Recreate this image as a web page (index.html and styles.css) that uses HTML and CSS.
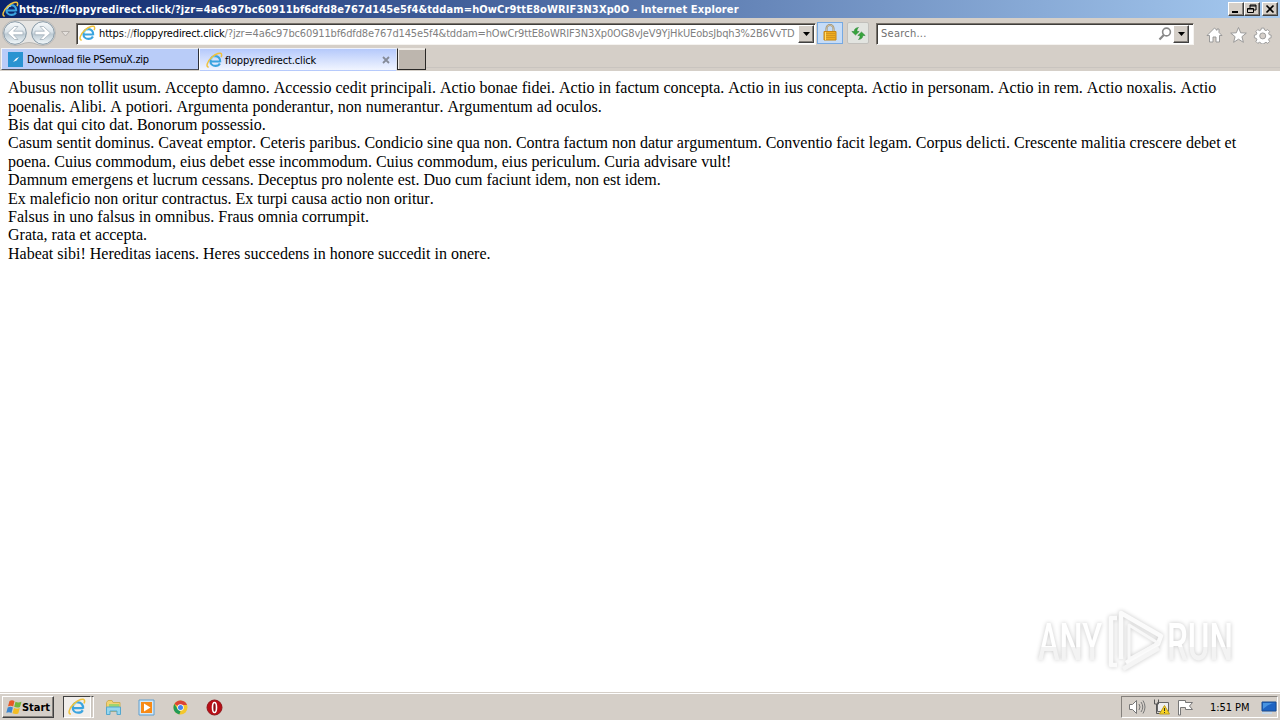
FILE: index.html
```html
<!DOCTYPE html>
<html lang="en">
<head>
    <meta charset="UTF-8">
    <meta name="viewport" content="width=device-width, initial-scale=1.0">
    <title>floppyredirect.click</title>
    <link rel="stylesheet" href="styles.css">
</head>
<body>
    <!-- shared icon -->
    <svg class="defs" width="0" height="0">
        <symbol id="ie" viewBox="0 0 16 16">
            <path d="M13.4 8.900H5M13.400 9.500c.3-3.500-1.800-5.600-4.600-5.600-2.700 0-4.600 2-4.600 4.700 0 2.600 2 4.500 4.700 4.500 2 0 3.500-.9 4.200-2.300" fill="none" stroke="#3ba4df" stroke-width="2"/>
            <path d="M5.200 7.300C5.600 5.600 7 4.700 8.600 4.700" fill="none" stroke="#9be0fa" stroke-width="1"/>
            <path d="M2.600 14.200C-.5 14.400 1 9 5.200 5.200 9 1.600 14.200-.3 14.700 2.300c.2.8 0 1.600-.5 2.600" fill="none" stroke="#f0c23c" stroke-width="1.400"/>
        </symbol>
    </svg>

    <div class="titlebar">
        <svg class="title-icon" width="17" height="17"><use href="#ie"/></svg>
        <span class="title-text">https://floppyredirect.click/?jzr=4a6c97bc60911bf6dfd8e767d145e5f4&amp;tddam=hOwCr9ttE8oWRIF3N3Xp0O - Internet Explorer</span>
        <div class="window-buttons">
            <button class="win-btn"><svg width="12" height="10"><path d="M2 7h6v2H2z"/></svg></button>
            <button class="win-btn"><svg width="12" height="10"><path d="M4 1h6v5H8M4 2h6M4 1v3M1.500 4.500h6v4h-6zM1.500 5h6" fill="none" stroke="#000"/></svg></button>
            <button class="win-btn close"><svg width="12" height="10"><path d="M2.500 1.500l7 7M9.500 1.500l-7 7" stroke="#000" stroke-width="1.700"/></svg></button>
        </div>
    </div>

    <div class="navbar">
        <svg class="nav-arrows" width="76" height="30" viewBox="0 0 76 30">
            <defs>
                <linearGradient id="ball" x1="0" y1="0" x2="0" y2="1">
                    <stop offset="0" stop-color="#f8fafb"/>
                    <stop offset=".45" stop-color="#dbe4ea"/>
                    <stop offset=".55" stop-color="#bccad3"/>
                    <stop offset="1" stop-color="#f4fafd"/>
                </linearGradient>
            </defs>
            <path d="M15 2.500h28a12.500 12.500 0 0 1 0 25c-6 0-8-3-14-3s-8 3-14 3a12.500 12.500 0 0 1 0-25z" fill="#e6e5e3" stroke="#b9b7b4"/>
            <g fill="url(#ball)" stroke="#8698a5">
                <circle cx="15" cy="15" r="11.300"/>
                <circle cx="43" cy="15" r="11.300"/>
            </g>
            <g fill="#fff" stroke="#a3b0ba" stroke-width=".8">
                <path d="M7.500 15l7-6.500h3.500l-4.500 4.700H23v3.600h-9.500l4.500 4.700h-3.500z"/>
                <path d="M50.500 15l-7-6.500H40l4.500 4.700H35v3.600h9.500L40 21.500h3.500z"/>
            </g>
            <path d="M61.500 13.500h8l-4 4.500z" fill="#e4e0dc" stroke="#b5b0ab"/>
        </svg>

        <div class="field address">
            <svg class="field-icon" width="17" height="17"><use href="#ie"/></svg>
            <span class="url"><span class="dark">https</span>://<span class="dark">floppyredirect.click</span>/?jzr=4a6c97bc60911bf6dfd8e767d145e5f4&amp;tddam=hOwCr9ttE8oWRIF3N3Xp0OG8vJeV9YjHkUEobsJbqh3%2B6VvTD</span>
            <button class="drop"><svg width="7" height="4"><path d="M0 0h7L3.500 4z"/></svg></button>
        </div>

        <div class="tool lock">
            <svg width="16" height="18" viewBox="0 0 16 18">
                <path d="M4.500 8V4.500a3.500 3.500 0 0 1 7 0V8" fill="none" stroke="#9a8b6c" stroke-width="2"/>
                <path d="M4.500 8V4.500a3.500 3.500 0 0 1 7 0V8" fill="none" stroke="#e2d6b7" stroke-width=".7"/>
                <path d="M2 7.500h12v8.500H2z" fill="#efad20" stroke="#c78615"/>
                <path d="M2.500 9.500h11M2.500 11.500h11M2.500 13.500h11" stroke="#d5961f"/>
                <path d="M3.500 8v8" stroke="#ffdc70"/>
            </svg>
        </div>
        <div class="tool refresh">
            <svg width="15" height="15" viewBox="0 0 15 15" fill="#36a43b" stroke="#248030" stroke-width=".5">
                <path d="M4.500 9L.8 5.500h2.400C3.300 3 4.700 1.800 7.500 1.500 6.200 2.700 6 3.800 6 5.500h2.200z"/>
                <path d="M10.500 6l3.700 3.500h-2.400c-.1 2.500-1.500 3.700-4.300 4C8.800 12.300 9 11.200 9 9.500H6.800z"/>
            </svg>
        </div>

        <div class="field search">
            <span class="placeholder">Search...</span>
            <svg class="magnifier" width="14" height="14"><circle cx="8.500" cy="5" r="3.900" fill="none" stroke="#888" stroke-width="1.600"/><path d="M5.800 7.900L1.500 12.500" stroke="#888" stroke-width="2.200"/></svg>
            <button class="drop"><svg width="7" height="4"><path d="M0 0h7L3.500 4z"/></svg></button>
        </div>

        <svg class="menu-icons" width="70" height="18" viewBox="0 0 70 18" fill="#fff" stroke="#929292" stroke-width=".9">
            <path d="M3.500 16V9.500H1L8.500 2l2.500 2.400V3h2v3.500l3 3h-2.500V16h-3.500v-5h-3v5z"/>
            <path d="M32.500 1.500l2.200 5.300 5.600.3-4.400 3.600 1.500 5.600-4.900-3.100-4.900 3.100 1.500-5.600-4.400-3.600 5.600-.3z"/>
            <g transform="translate(2.500 .7) scale(.94)">
                <path d="M56.300 1.500h2.800l.5 2 1.600.7 1.800-1.100 2 2-1.100 1.800.7 1.600 2 .5v2.800l-2 .5-.7 1.600 1.100 1.800-2 2-1.800-1.100-1.600.7-.5 1h-2.800l-.5-1-1.600-.7-1.800 1.100-2-2 1.100-1.800-.7-1.600-2-.5V9l2-.5.7-1.600-1.100-1.800 2-2 1.800 1.100 1.600-.7z"/>
                <circle cx="57.700" cy="9.800" r="3.200" fill="#d5cfc9"/>
            </g>
        </svg>
    </div>

    <div class="tabs">
        <div class="tab">
            <svg class="tab-icon" width="16" height="16"><path d="M0 0h15v15H0z" fill="#2993d1"/><path d="M5 10l3-3.500 3-1.500-2.500 3.500z" fill="#fff"/></svg>
            <span class="tab-first-text">Download file PSemuX.zip</span>
        </div>
        <div class="tab active">
            <svg class="tab-icon" width="17" height="17"><use href="#ie"/></svg>
            <span class="tab-second-text">floppyredirect.click</span>
            <svg class="tab-close" width="8" height="8"><path d="M1 1l6 6M7 1L1 7" stroke="#858b98" stroke-width="1.800"/></svg>
        </div>
        <div class="new-tab"></div>
    </div>

    <main class="page">
        Abusus non tollit usum. Accepto damno. Accessio cedit principali. Actio bonae fidei. Actio in factum concepta. Actio in ius concepta. Actio in personam. Actio in rem. Actio noxalis. Actio<br>
        poenalis. Alibi. A potiori. Argumenta ponderantur, non numerantur. Argumentum ad oculos.<br>
        Bis dat qui cito dat. Bonorum possessio.<br>
        Casum sentit dominus. Caveat emptor. Ceteris paribus. Condicio sine qua non. Contra factum non datur argumentum. Conventio facit legam. Corpus delicti. Crescente malitia crescere debet et<br>
        poena. Cuius commodum, eius debet esse incommodum. Cuius commodum, eius periculum. Curia advisare vult!<br>
        Damnum emergens et lucrum cessans. Deceptus pro nolente est. Duo cum faciunt idem, non est idem.<br>
        Ex maleficio non oritur contractus. Ex turpi causa actio non oritur.<br>
        Falsus in uno falsus in omnibus. Fraus omnia corrumpit.<br>
        Grata, rata et accepta.<br>
        Habeat sibi! Hereditas iacens. Heres succedens in honore succedit in onere.
    </main>

    <svg class="watermark" width="240" height="76" viewBox="0 0 240 76">
        <defs>
            <linearGradient id="fade" x1="0" y1="0" x2="0" y2="1">
                <stop offset=".58" stop-color="#fff"/>
                <stop offset=".58" stop-color="#f3f3f3"/>
            </linearGradient>
        </defs>
        <g fill="url(#fade)" font-family="Roboto, sans-serif" font-weight="500" font-size="51">
            <text x="8" y="56" textLength="64" lengthAdjust="spacingAndGlyphs">ANY</text>
            <text x="137" y="56" textLength="66" lengthAdjust="spacingAndGlyphs">RUN</text>
        </g>
        <g fill="none" stroke-width="4.500" stroke-linejoin="round">
            <path d="M87 14h-6v47h6" stroke="#fbfbfb"/>
            <path d="M91 55V9l40 23-3 8-32 19" stroke="#fbfbfb"/>
            <path d="M99 21l29 18-29 16z" stroke="#f8f8f8" stroke-width="3"/>
            <path d="M93 65l36-21" stroke="#f5f5f5"/>
        </g>
    </svg>

    <div class="taskbar">
        <button class="start">
            <svg width="17" height="16" viewBox="0 0 17 16">
                <path d="M3.500 2c2-1 3.500-.8 5 .2L7.200 7.500c-1.600-1-3.200-1-5.200-.2z" fill="#e75a28"/>
                <path d="M9.500 2.800c2 1 3.800.8 6 0L14 8c-2 .9-3.800.8-5.800-.2z" fill="#72b83d"/>
                <path d="M1.700 8.500c2-.9 3.600-.8 5.200.1L5.500 14c-1.600-1-3.200-1-5.200-.2z" fill="#3c86cf"/>
                <path d="M8 9c2 1 3.800 1 5.800.1L12.300 14.500c-2 .9-3.800.8-5.800-.2z" fill="#f3bd24"/>
            </svg>
            <span class="start-text">Start</span>
        </button>
        <div class="quick active"><svg width="18" height="18"><use href="#ie"/></svg></div>
        <div class="quick-edge"></div>
        <svg class="quick folder" width="17" height="17" viewBox="0 0 17 17">
            <path d="M1.500 3.500L3 1.500h4l1 2h7v9H1.500z" fill="#f2d273" stroke="#cfae54"/>
            <path d="M4 5h10v3H4z" fill="#9fd46d"/>
            <path d="M1.500 8h14v7.500h-3.500V12H5v3.500H1.500z" fill="#96d6ee" stroke="#53a7cf"/>
        </svg>
        <svg class="quick player" width="17" height="17" viewBox="0 0 17 17">
            <path d="M1 1h15v15H1z" fill="#d4e8f7" stroke="#5f9fd0"/>
            <path d="M3 3h11v11H3z" fill="#f78a16"/>
            <path d="M6 4.500v8l6.500-4z" fill="#fff"/>
        </svg>
        <svg class="quick chrome" width="15" height="15" viewBox="0 0 15 15">
            <circle cx="7.500" cy="7.500" r="7" fill="#f4c72b"/>
            <path d="M7.500 7.500L1.400 4A7 7 0 0 1 14 4.900H7.500z" fill="#db4437"/>
            <path d="M1.400 4L5 9.500l2.500 2-1.200 2.900A7 7 0 0 1 1.400 4z" fill="#229b57"/>
            <circle cx="7.500" cy="7.500" r="3.200" fill="#fff"/>
            <circle cx="7.500" cy="7.500" r="2.500" fill="#4384f0"/>
        </svg>
        <svg class="quick opera" width="17" height="17" viewBox="0 0 17 17">
            <circle cx="8.500" cy="8.500" r="7.500" fill="#b90e16" stroke="#8e151a"/>
            <ellipse cx="8.500" cy="8.500" rx="2" ry="5" fill="#891016" stroke="#fff" stroke-width="1.600"/>
        </svg>

        <div class="tray">
            <svg class="tray-icons" width="66" height="18" viewBox="0 0 66 18" fill="#fff" stroke="#777">
                <path d="M1.500 6.500h3l4-4v13l-4-4h-3z"/>
                <path d="M11 6q2 3 0 6M13 4q3.500 5 0 10M15 2.500q4 6.500 0 13" fill="none"/>
                <path d="M29.500 4.500h11v9h-11z" fill="#eee" stroke="#666"/>
                <path d="M26.500 1.500v4.500h4V1.500M28.500 6v9.500h4" fill="none" stroke="#555"/>
                <path d="M36.500 7.500l5 8.500h-10z" fill="#f8d321" stroke="#bd9d1d"/>
                <path d="M36.500 10v3M36.500 14v1" stroke="#333"/>
                <path d="M50.500 17V2.500h7v2h7l-3 3.500 3 3.500h-7v-2h-5V17z"/>
            </svg>
            <span class="clock">1:51 PM</span>
            <svg class="desktop" width="16" height="15" viewBox="0 0 16 15">
                <path d="M1 2h14v9H1z" fill="#1e63c2" stroke="#174d93"/>
                <path d="M2 9Q8 3 14 3V3H2z" fill="#4793e1"/>
                <path d="M1 12h10v2H1z" fill="#c4d7e9"/>
            </svg>
        </div>
    </div>
</body>
</html>
```
FILE: styles.css
```css
* {
    box-sizing: border-box;
}
body {
    margin: 0;
    width: 1280px;
    height: 720px;
    overflow: hidden;
    display: flex;
    flex-direction: column;
    position: relative;
    background: #fff;
    font: 11px "DejaVu Sans Condensed", "DejaVu Sans", sans-serif;
    color: #000;
}
.defs {
    position: absolute;
}
svg {
    display: block;
    flex: none;
}
span {
    white-space: nowrap;
}
button {
    padding: 0;
    font: inherit;
    background: #d5cfc8;
    border: 1px solid;
    border-color: #fff #404040 #404040 #fff;
    box-shadow: inset -1px -1px #85817c;
    display: flex;
    align-items: center;
    justify-content: center;
}

/* title bar */
.titlebar {
    height: 18px;
    flex: none;
    display: flex;
    align-items: center;
    padding: 0 2px;
    background: linear-gradient(90deg, #0a246a, #a6caf0);
    color: #fff;
}
.title-text {
    font-weight: bold;
    letter-spacing: 0.12px;
}
.window-buttons {
    display: flex;
    margin-left: auto;
}
.win-btn {
    width: 16px;
    height: 14px;
}
.close {
    margin-left: 2px;
}

/* address row */
.navbar {
    height: 30px;
    flex: none;
    display: flex;
    align-items: center;
    background: #d5cfc8;
}
.field {
    height: 22px;
    margin-top: 1px;
    display: flex;
    align-items: center;
    background: #fff;
    border: 1px solid;
    border-color: #79736c #f5f3f0 #f5f3f0 #79736c;
    box-shadow: inset 1px 1px #403e3b;
}
.address {
    width: 740px;
    padding: 0 1px 0 2px;
}
.url {
    margin-left: 3px;
    color: #808080;
    letter-spacing: -0.145px;
}
.dark {
    color: #000;
}
.drop {
    width: 16px;
    height: 18px;
    margin-left: auto;
    flex: none;
}
.tool {
    height: 22px;
    display: flex;
    align-items: center;
    justify-content: center;
}
.lock {
    width: 26px;
    margin-left: 1px;
    background: #c6dcf7;
    border: 1px solid #76a9e2;
}
.refresh {
    width: 22px;
    margin-left: 4px;
    background: #e2e4e0;
    border: 1px solid #c2c0bc;
    border-radius: 2px;
}
.search {
    width: 318px;
    margin-left: 7px;
    padding: 0 4px;
}
.placeholder {
    color: #707070;
    letter-spacing: 0.25px;
}
.magnifier {
    margin-left: auto;
}
.search .drop {
    margin-left: 1px;
}
.menu-icons {
    margin: 4px 0 0 12px;
}

/* tabs */
.tabs {
    height: 23px;
    flex: none;
    display: flex;
    background: linear-gradient(#d5cfc8 19px, #c9c4bf 19px, #c9c4bf 20px, #d5cfc8 20px);
}
.tab {
    width: 198px;
    height: 22px;
    margin-left: 1px;
    padding: 1px 6px 0;
    display: flex;
    align-items: center;
    background: #b9ccf8;
    border: 1px solid;
    border-color: #f2f3f5 #2c3039 #50545e #f2f3f5;
}
.tab-icon {
    margin-right: 3px;
}
.tab-first-text {
    letter-spacing: -0.3px;
}
.tab-second-text {
    letter-spacing: -0.15px;
}
.active.tab {
    height: 23px;
    margin-left: 0;
    padding: 1px 6px 0;
    background: linear-gradient(#b5c9fb, #f1f5ff);
    border-color: #eef2fc #dfe4ef transparent #fff;
}
.active .tab-icon {
    margin-right: 2px;
}
.tab-close {
    margin-left: auto;
}
.new-tab {
    width: 29px;
    height: 22px;
    background: #bdb6ae;
    border: 1px solid;
    border-color: #eeeae5 #292826 #292826 #292826;
    box-shadow: inset 1px 1px #eeeae5;
}

/* page */
.page {
    flex: 1;
    padding: 8.2px 8px 0;
    font: 16px/18.4px "Liberation Serif", serif;
    font-kerning: none;
    white-space: nowrap;
}
.watermark {
    position: absolute;
    left: 1030px;
    top: 604px;
    overflow: visible;
    filter: drop-shadow(0 0 2px rgba(0, 0, 0, 0.22));
}

/* taskbar */
.taskbar {
    height: 28px;
    flex: none;
    display: flex;
    align-items: center;
    padding: 1px 2px 0;
    background: #d5cfc8;
    border-top: 1px solid #d5cfc8;
    box-shadow: inset 0 1px #fff;
}
.start {
    width: 52px;
    height: 22px;
    font-weight: bold;
}
.start-text {
    margin-left: -1px;
}
.quick.active {
    width: 28px;
    height: 22px;
    margin-left: 9px;
    display: flex;
    align-items: center;
    justify-content: center;
    background: #f1eeeb;
    border: 1px solid;
    border-color: #404040 #fff #fff #404040;
}
.quick-edge {
    width: 3px;
    height: 22px;
    border: 1px solid;
    border-color: #404040 #fff #fff #c9c4bd;
}
.folder {
    margin-left: 11px;
}
.player {
    margin-left: 16px;
}
.chrome {
    margin-left: 18px;
}
.opera {
    margin-left: 18px;
}
.tray {
    width: 157px;
    height: 22px;
    margin-left: auto;
    display: flex;
    align-items: center;
    padding: 0 0 0 6px;
    border: 1px solid;
    border-color: #85817c #fff #fff #85817c;
}
.clock {
    margin-left: 16px;
    letter-spacing: -0.05px;
}
.desktop {
    margin-left: auto;
}
```
